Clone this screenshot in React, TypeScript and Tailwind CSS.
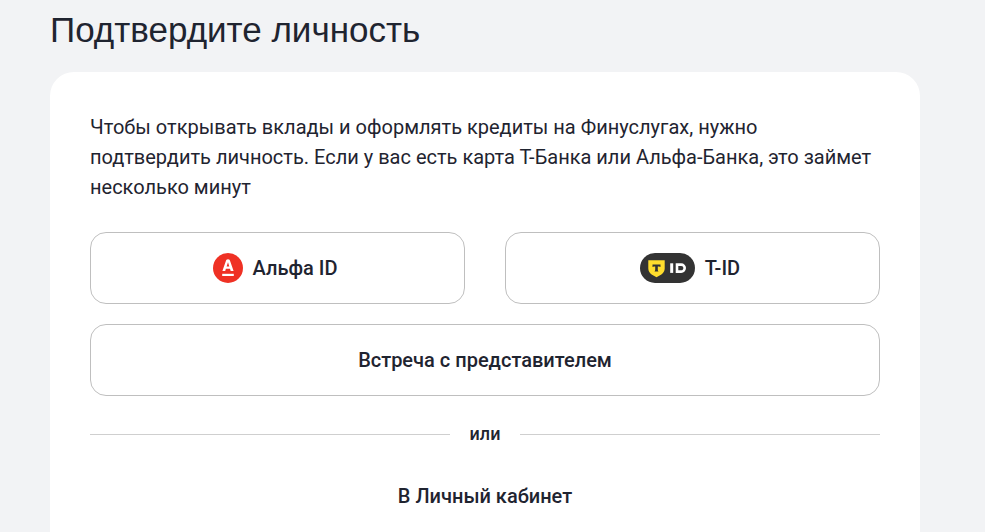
import type { ReactNode } from 'react';

function AlfaIcon() {
  return (
    <svg width="30" height="30" viewBox="0 0 30 30" aria-hidden="true">
      <circle cx="15" cy="15" r="15" fill="#ef3124" />
      <path d="M9.200 20.800h11.600v2.200H9.200z" fill="#fff" />
      <path
        d="M17.200 8.200C16.900 7.100 16.400 6.300 15 6.300s-1.900.8-2.200 1.900L9.400 18h2.800l.7-2.200h4.100l.7 2.200h2.900zM13.600 13.600l1.400-4.400 1.300 4.400z"
        fill="#fff"
      />
    </svg>
  );
}

function TBankIcon() {
  return (
    <svg width="55" height="30" viewBox="0 0 55 30" aria-hidden="true">
      <rect width="55" height="30" rx="15" fill="#333" />
      <path d="M8.300 7.200h16.400v8.400c0 2.400-1.200 4.600-3.300 5.800l-4.900 2.800-4.900-2.800c-2.100-1.200-3.300-3.400-3.300-5.800z" fill="#ffdd2d" />
      <path d="M12.500 11.400v2.600c.4-.4 1-.6 1.700-.6h1v3c0 1-.3 1.600-.7 2h4c-.4-.4-.7-1-.7-2v-3h1c.7 0 1.300.2 1.700.6v-2.600z" fill="#333" />
      <path d="M30.200 10.300h3v9.600h-3z" fill="#fff" />
      <path d="M37 11.600h4.200a3.500 3.500 0 0 1 0 7H37z" fill="none" stroke="#fff" strokeWidth="2.600" />
    </svg>
  );
}

function OptionButton({ icon, children }: { icon?: ReactNode; children: ReactNode }) {
  return (
    <button
      type="button"
      className="flex h-18 w-full items-center justify-center rounded-2xl border border-[#bfbfbf] bg-white text-xl font-medium"
    >
      {icon && <span className="mr-[10px] -ml-[5px]">{icon}</span>}
      {children}
    </button>
  );
}

export default function App() {
  return (
    <main className="min-h-screen bg-[#f2f3f5] px-[50px] pt-2 font-['Roboto',sans-serif] text-[#1f2430]">
      <div className="max-w-[870px]">
        <h1 className="mb-5 font-['Liberation_Sans',sans-serif] text-[35px] leading-11">Подтвердите личность</h1>
        <section className="min-h-[calc(100vh-72px)] rounded-t-3xl bg-white px-10 pt-10 pb-2">
          <p className="mb-[30px] text-xl leading-[30px]">
            Чтобы открывать вклады и оформлять кредиты на Финуслугах, нужно подтвердить личность. Если
            у вас есть карта Т-Банка или Альфа-Банка, это займет несколько минут
          </p>
          <div className="mb-5 grid grid-cols-2 gap-10">
            <OptionButton icon={<AlfaIcon />}>Альфа ID</OptionButton>
            <OptionButton icon={<TBankIcon />}>T-ID</OptionButton>
          </div>
          <OptionButton>Встреча с представителем</OptionButton>
          <div className="my-6 flex items-center gap-5 text-lg leading-7 font-medium">
            <span className="h-px flex-1 bg-[#cfcfcf]" />
            или
            <span className="h-px flex-1 bg-[#cfcfcf]" />
          </div>
          <button type="button" className="h-12 w-full text-xl font-medium">
            В Личный кабинет
          </button>
        </section>
      </div>
    </main>
  );
}
